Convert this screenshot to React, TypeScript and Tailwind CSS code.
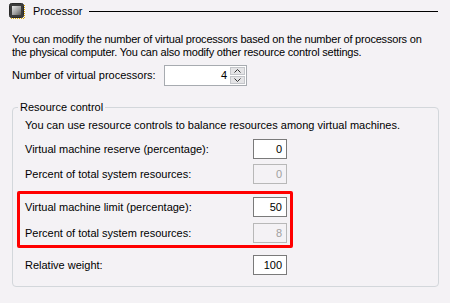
const ChipIcon = () => (
  <svg width="16" height="16" viewBox="0 0 16 16">
    <defs>
      <linearGradient id="chip" x1="0" y1="0" x2="1" y2="1">
        <stop offset="0" stopColor="#e8e8e8" />
        <stop offset="0.6" stopColor="#9a9a9a" />
        <stop offset="1" stopColor="#5a5a5a" />
      </linearGradient>
    </defs>
    <rect x="0.5" y="0.5" width="14" height="14" rx="2" fill="#3c3c3c" stroke="#2a2a2a" />
    <rect x="3" y="3" width="9" height="9" fill="url(#chip)" />
    {[2, 4, 6, 8, 10, 12, 14].map((p) => (
      <rect key={"r" + p} x="15" y={p} width="1" height="1" fill="#e0a800" />
    ))}
    {[2, 4, 6, 8, 10, 12, 14].map((p) => (
      <rect key={"b" + p} x={p} y="15" width="1" height="1" fill="#e0a800" />
    ))}
  </svg>
);

const Field = (props: { value: string; disabled?: boolean }) => {
  const { value, disabled } = props;
  return (
    <div
      className={`w-[34px] h-[20px] flex items-center justify-end pr-[4px] border ${
        disabled
          ? "border-[#b8b8b8] text-[#a0a0a0] bg-[#f4f2f5]"
          : "border-[#7a7a7a] text-black bg-white"
      }`}
    >
      {value}
    </div>
  );
};

const Row = (props: { label: string; value: string; disabled?: boolean }) => (
  <div className="flex items-center h-[20px]">
    <div className="w-[228px]">{props.label}</div>
    <Field value={props.value} disabled={props.disabled} />
  </div>
);

export default function App() {
  return (
    <div
      className="w-[450px] h-[303px] bg-[#f4f2f5] text-[11px] leading-[13px] text-black overflow-hidden flex flex-col"
      style={{ fontFamily: '"Liberation Sans", Arial, sans-serif' }}
    >
      <div className="h-[22px] flex items-center pl-[9px] pr-[12px]">
        <ChipIcon />
        <span className="ml-[8px]">Processor</span>
        <div className="flex-1 h-px bg-black ml-[6px]" />
      </div>

      <p className="mt-[11px] px-[12px] tracking-[-0.2px]">
        You can modify the number of virtual processors based on the number of processors on
        <br />
        the physical computer. You can also modify other resource control settings.
      </p>

      <div className="mt-[6px] px-[12px] flex items-center h-[21px]">
        <div className="w-[152px]">Number of virtual processors:</div>
        <div className="w-[83px] h-[21px] border border-[#a7abb0] bg-white flex items-stretch">
          <div className="flex-1 flex items-center justify-end pr-[3px]">4</div>
          <div className="w-[16px] flex flex-col gap-px py-px pr-px">
            <div className="flex-1 bg-[#e4e4e6] border border-[#c4c6ca] flex items-center justify-center">
              <svg width="7" height="4" viewBox="0 0 7 4">
                <path d="M0.5 3.5 L3.5 0.5 L6.5 3.5" stroke="#333" fill="none" />
              </svg>
            </div>
            <div className="flex-1 bg-[#e4e4e6] border border-[#c4c6ca] flex items-center justify-center">
              <svg width="7" height="4" viewBox="0 0 7 4">
                <path d="M0.5 0.5 L3.5 3.5 L6.5 0.5" stroke="#333" fill="none" />
              </svg>
            </div>
          </div>
        </div>
      </div>

      <fieldset className="mt-[15px] ml-[12px] w-[427px] border border-[#d3d7db] rounded-[4px] px-[12px] pb-[11px]">
        <legend className="-ml-[7px] px-[2px]">Resource control</legend>
        <div className="mt-[5px]">You can use resource controls to balance resources among virtual machines.</div>
        <div className="mt-[7px]">
          <Row label="Virtual machine reserve (percentage):" value="0" />
        </div>
        <div className="mt-[5px]">
          <Row label="Percent of total system resources:" value="0" disabled />
        </div>
        <div className="mt-[7px] -ml-[8px] w-[276px] border-[3px] border-[#ff0000] rounded-[2px] pl-[5px] pr-[3px] pt-[3px] pb-[2px] flex flex-col gap-[6px]">
          <Row label="Virtual machine limit (percentage):" value="50" />
          <Row label="Percent of total system resources:" value="8" disabled />
        </div>
        <div className="mt-[7px]">
          <Row label="Relative weight:" value="100" />
        </div>
      </fieldset>
    </div>
  );
}
